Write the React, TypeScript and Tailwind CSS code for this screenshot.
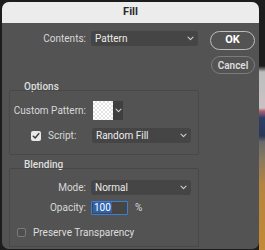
import React from "react";

function Chevron({ className = "" }: { className?: string }) {
  return (
    <svg width="7" height="5" viewBox="0 0 7 5" className={className}>
      <path d="M1 1.2 L3.5 3.6 L6 1.2" fill="none" stroke="#cfcfcf" strokeWidth="1.1" strokeLinecap="round" strokeLinejoin="round" />
    </svg>
  );
}

function Select({ label, w }: { label: string; w: string }) {
  return (
    <div className={`${w} h-[15px] bg-[#454545] rounded-[3px] flex items-center justify-between pl-[4px] pr-[4px] text-[#ececec]`}>
      <span className="leading-none">{label}</span>
      <Chevron />
    </div>
  );
}

export default function App() {
  return (
    <div className="w-[265px] h-[250px] flex overflow-hidden bg-[#1d1d1d] font-['Roboto','Liberation_Sans',sans-serif] text-[10px]">
      <div className="pl-[2px] pt-[2px] flex">
        <div className="w-[257px] h-[247px] rounded-[7px] overflow-hidden flex flex-col bg-[#535353]">
          <div className="h-[21px] shrink-0 bg-[#ececec] flex items-center justify-center text-[11px] font-bold text-[#2b2b2b]">
            Fill
          </div>
          <div className="flex flex-1 pl-[7px] pt-[8px]">
            <div className="w-[190px] flex flex-col">
              <div className="flex items-center h-[15px]">
                <div className="w-[77px] text-right text-[#d8d8d8]">Contents:</div>
                <div className="ml-[5px]">
                  <Select label="Pattern" w="w-[107px]" />
                </div>
              </div>

              <div className="mt-[35px] h-[12px] leading-[12px] pl-[15px] text-[#dedede] font-medium">Options</div>
              <div className="-mt-[3px] border border-[#484848] rounded-[2px] flex flex-col pt-[10px] pb-[11px]">
                <div className="flex items-center">
                  <div className="w-[76px] text-right text-[#d8d8d8]">Custom Pattern:</div>
                  <div className="ml-[7px] flex h-[19px]">
                    <div className="w-[20px] h-[19px] bg-[repeating-conic-gradient(#e4e4e4_0_25%,#ffffff_0_50%)] bg-[length:4px_4px]" />
                    <div className="w-[10px] h-[19px] bg-[#3f3f3f] flex items-center justify-center">
                      <Chevron />
                    </div>
                  </div>
                </div>
                <div className="flex items-center mt-[8px]">
                  <div className="ml-[21px] w-[10px] h-[10px] rounded-[2px] bg-[#e8e8e8] flex items-center justify-center">
                    <svg width="8" height="8" viewBox="0 0 8 8">
                      <path d="M1.3 4.2 L3.2 6 L6.8 1.6" fill="none" stroke="#3a3a3a" strokeWidth="1.5" strokeLinecap="round" strokeLinejoin="round" />
                    </svg>
                  </div>
                  <div className="ml-[7px] w-[44px] text-[#d8d8d8]">Script:</div>
                  <Select label="Random Fill" w="w-[99px]" />
                </div>
              </div>

              <div className="mt-[4px] h-[12px] leading-[12px] pl-[15px] text-[#dedede] font-medium">Blending</div>
              <div className="-mt-[3px] border border-[#484848] rounded-[2px] flex flex-col pt-[11px] pb-[6px]">
                <div className="flex items-center">
                  <div className="w-[76px] text-right text-[#d8d8d8]">Mode:</div>
                  <div className="ml-[5px]">
                    <Select label="Normal" w="w-[100px]" />
                  </div>
                </div>
                <div className="flex items-center mt-[5px]">
                  <div className="w-[76px] text-right text-[#d8d8d8]">Opacity:</div>
                  <div className="ml-[5px] w-[37px] h-[14px] bg-[#454545] border border-[#3c7fd9] rounded-[1px] flex items-center pl-[1px]">
                    <span className="bg-[#2f62ad] text-white leading-[11px] px-[1px]">100</span>
                  </div>
                  <div className="ml-[7px] text-[#d8d8d8]">%</div>
                </div>
                <div className="flex items-center mt-[10px]">
                  <div className="ml-[7px] w-[9px] h-[9px] rounded-[2px] border border-[#7a7a7a] bg-[#4e4e4e]" />
                  <div className="ml-[7px] text-[#dedede]">Preserve Transparency</div>
                </div>
              </div>
            </div>

            <div className="ml-[11px] flex flex-col items-start">
              <div className="w-[45px] h-[19px] rounded-full border-[1.5px] border-[#bdbdbd] flex items-center justify-center text-white font-bold text-[11px]">
                OK
              </div>
              <div className="ml-[1px] mt-[6px] w-[44px] h-[18px] rounded-full border-[1.5px] border-[#7c7c7c] flex items-center justify-center text-[#dcdcdc] font-semibold text-[10px]">
                Cancel
              </div>
            </div>
          </div>
        </div>
      </div>
      <div className="flex-1 bg-[linear-gradient(to_bottom,#1d1d1d_0px,#1d1d1d_66px,#bdbdbd_72px,#c9c2c4_108px,#b06070_111px,#2c3d66_118px,#2a3656_136px,#6a6a68_142px,#8a7a60_160px,#b48440_185px,#c48a34_250px)]" />
    </div>
  );
}
